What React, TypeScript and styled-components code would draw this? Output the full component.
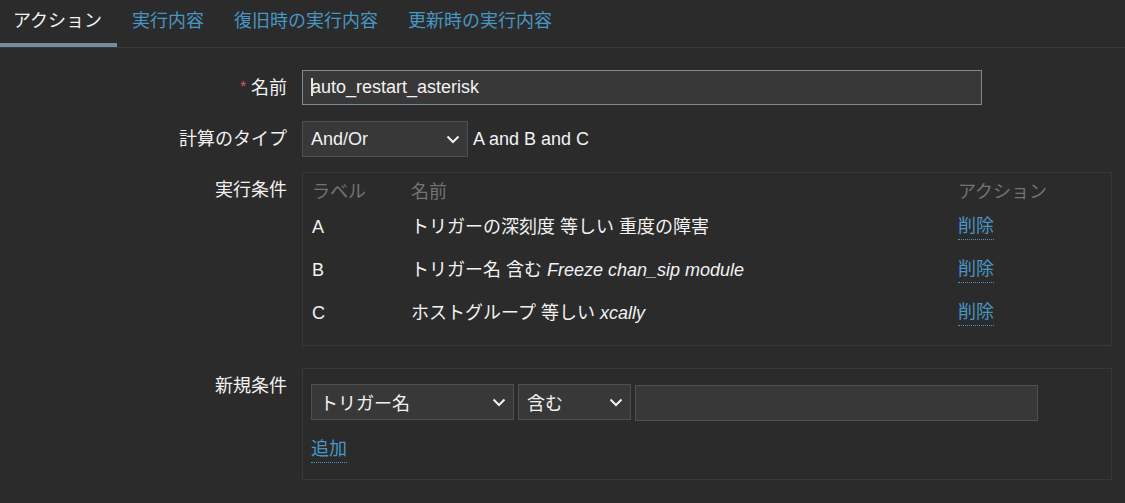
import React from "react";
import styled, { createGlobalStyle } from "styled-components";

const Global = createGlobalStyle`
  html, body { margin: 0; padding: 0; background: #2b2b2b; }
  body {
    font-family: "Liberation Sans", Arial, "Noto Sans CJK JP", sans-serif;
    font-size: 18px;
    color: #f2f2f2;
  }
  * { box-sizing: border-box; }
`;

const Page = styled.div`
  width: 1125px;
  height: 503px;
  background: #2b2b2b;
  overflow: hidden;
`;

const TabBar = styled.div`
  display: flex;
  border-bottom: 1px solid #383838;
  height: 48px;
  margin-left: -2px;
`;

const Tab = styled.div<{ $active?: boolean }>`
  height: 47px;
  line-height: 43px;
  padding: 0 15px 0 15px;
  color: ${(p) => (p.$active ? "#f2f2f2" : "#4796c4")};
  border-bottom: 4px solid ${(p) => (p.$active ? "#768d99" : "transparent")};
  white-space: nowrap;
`;

const Form = styled.div`
  display: grid;
  grid-template-columns: 287px 810px;
  column-gap: 15px;
  padding-top: 22px;
`;

const Label = styled.div`
  text-align: right;
  line-height: 36px;
  white-space: nowrap;
`;

const Field = styled.div<{ $mb?: number }>`
  display: flex;
  align-items: center;
  margin-bottom: ${(p) => p.$mb ?? 15}px;
`;

const Star = styled.span`
  color: #e45959;
  font-size: 15px;
  position: relative;
  top: -3px;
  margin-right: 5px;
`;

const InputWrap = styled.div`
  position: relative;
  width: 680px;
  height: 35px;
`;

const TextInput = styled.input<{ $focus?: boolean }>`
  width: 100%;
  height: 100%;
  background: #383838;
  border: 1px solid ${(p) => (p.$focus ? "#768d99" : "#4f4f4f")};
  color: #f2f2f2;
  font: inherit;
  font-size: 18px;
  padding: 0 8px;
  outline: none;
`;

const Caret = styled.span`
  position: absolute;
  left: 9px;
  top: 8px;
  width: 2px;
  height: 18px;
  background: #e6e6e6;
`;

const SelectBox = styled.div<{ $w: number; $h?: number }>`
  width: ${(p) => p.$w}px;
  height: ${(p) => p.$h ?? 36}px;
  background: #383838;
  border: 1px solid #4f4f4f;
  display: flex;
  align-items: center;
  justify-content: space-between;
  padding: 0 7px 0 8px;
  color: #f2f2f2;
  flex-shrink: 0;
`;

const Chevron = () => (
  <svg width="14" height="9" viewBox="0 0 14 9">
    <path d="M1.5 1.5 L7 7 L12.5 1.5" fill="none" stroke="#f2f2f2" strokeWidth="2" />
  </svg>
);

const Select = ({ w, children }: { w: number; children: React.ReactNode }) => (
  <SelectBox $w={w}>
    <span>{children}</span>
    <Chevron />
  </SelectBox>
);

const Expr = styled.span`
  margin-left: 5px;
`;

const Box = styled.div<{ $pad: string }>`
  width: 810px;
  border: 1px solid #383838;
  padding: ${(p) => p.$pad};
`;

const Row = styled.div<{ $h: number; $head?: boolean }>`
  display: grid;
  grid-template-columns: 99px 1fr 143px;
  height: ${(p) => p.$h}px;
  align-items: center;
  line-height: 26px;
  color: ${(p) => (p.$head ? "#737373" : "#f2f2f2")};
  white-space: nowrap;
`;

const Cell = styled.span`
  display: flex;
  align-items: center;
  gap: 0;
`;

const Link = styled.span`
  display: inline-block;
  color: #4796c4;
  line-height: 26px;
  border-bottom: 1px dotted #4796c4;
  justify-self: start;
`;

const Inline = styled.div`
  display: flex;
  gap: 4px;
  align-items: flex-start;
`;

const PlainInput = styled.div`
  width: 403px;
  height: 36px;
  margin-top: 1px;
  background: #383838;
  border: 1px solid #4f4f4f;
`;

const AddRow = styled.div`
  margin-top: 15px;
`;

const conditions = [
  { l: "A", name: <>トリガーの深刻度 等しい 重度の障害</> },
  { l: "B", name: <>トリガー名 含む&nbsp;<i>Freeze chan_sip module</i></> },
  { l: "C", name: <>ホストグループ 等しい&nbsp;<i>xcally</i></> },
];

export default function App() {
  return (
    <Page>
      <Global />
      <TabBar>
        <Tab $active>アクション</Tab>
        <Tab>実行内容</Tab>
        <Tab>復旧時の実行内容</Tab>
        <Tab>更新時の実行内容</Tab>
      </TabBar>
      <Form>
        <Label>
          <Star>*</Star>名前
        </Label>
        <Field $mb={16}>
          <InputWrap>
            <TextInput $focus defaultValue="auto_restart_asterisk" readOnly />
            <Caret />
          </InputWrap>
        </Field>

        <Label>計算のタイプ</Label>
        <Field>
          <Select w={166}>And/Or</Select>
          <Expr>A and B and C</Expr>
        </Field>

        <Label>実行条件</Label>
        <Field $mb={22}>
          <Box $pad="5px 10px 11px 9px">
            <Row $h={27} $head>
              <span>ラベル</span>
              <span>名前</span>
              <span>アクション</span>
            </Row>
            {conditions.map((c) => (
              <Row $h={43} key={c.l}>
                <Cell>{c.l}</Cell>
                <Cell>{c.name}</Cell>
                <Link>削除</Link>
              </Row>
            ))}
          </Box>
        </Field>

        <Label>新規条件</Label>
        <Field $mb={0}>
          <Box $pad="15px 8px 16px 8px">
            <Inline>
              <Select w={203}>トリガー名</Select>
              <Select w={113}>含む</Select>
              <PlainInput />
            </Inline>
            <AddRow>
              <Link>追加</Link>
            </AddRow>
          </Box>
        </Field>
      </Form>
    </Page>
  );
}
